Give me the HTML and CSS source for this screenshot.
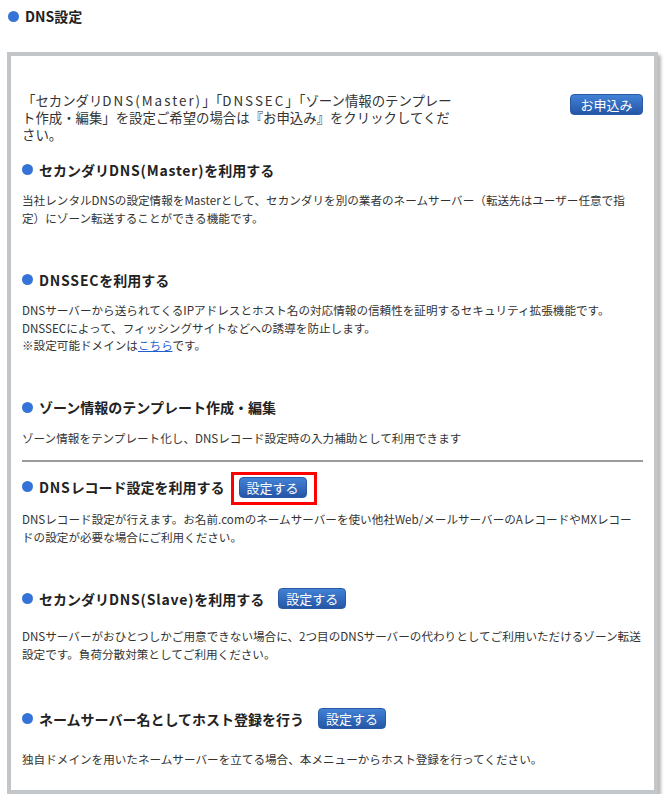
FILE: index.html
```html
<!DOCTYPE html>
<html lang="ja">
<head>
<meta charset="utf-8">
<title>DNS設定</title>
<link rel="stylesheet" href="styles.css">
</head>
<body>
<h1 class="page-title"><span class="dot dot--title"></span>DNS設定</h1>
<div class="panel">
  <div class="intro">
    <p class="intro-text">「セカンダリ<span class="latin">DNS(Master)</span>」「<span class="latin">DNSSEC</span>」「ゾーン情報のテンプレー<br>ト作成・編集」を設定ご希望の場合は『お申込み』をクリックしてくだ<br>さい。</p>
    <a class="btn btn--apply" href="#">お申込み</a>
  </div>

  <div class="sec sec--first">
    <h2 class="heading"><span class="dot"></span>セカンダリ<span class="latin-h">DNS(Master)</span>を利用する</h2>
    <p class="desc">当社レンタルDNSの設定情報をMasterとして、セカンダリを別の業者のネームサーバー（転送先はユーザー任意で指<br>定）にゾーン転送することができる機能です。</p>
  </div>

  <div class="sec">
    <h2 class="heading"><span class="dot"></span><span class="latin-h">DNSSEC</span>を利用する</h2>
    <p class="desc">DNSサーバーから送られてくるIPアドレスとホスト名の対応情報の信頼性を証明するセキュリティ拡張機能です。<br>DNSSECによって、フィッシングサイトなどへの誘導を防止します。<br>※設定可能ドメインは<a class="link" href="#">こちら</a>です。</p>
  </div>

  <div class="sec">
    <h2 class="heading"><span class="dot"></span>ゾーン情報のテンプレート作成・編集</h2>
    <p class="desc">ゾーン情報をテンプレート化し、DNSレコード設定時の入力補助として利用できます</p>
  </div>

  <hr class="rule">

  <div class="sec sec--after-rule">
    <h2 class="heading"><span class="dot"></span><span class="latin-h">DNS</span>レコード設定を利用する<span class="highlight"><a class="btn btn--set" href="#">設定する</a></span></h2>
    <p class="desc desc--first-btn">DNSレコード設定が行えます。お名前.comのネームサーバーを使い他社Web/メールサーバーのAレコードやMXレコー<br>ドの設定が必要な場合にご利用ください。</p>
  </div>

  <div class="sec">
    <h2 class="heading"><span class="dot"></span>セカンダリ<span class="latin-h">DNS(Slave)</span>を利用する<a class="btn btn--set btn--gap" href="#">設定する</a></h2>
    <p class="desc desc--btn">DNSサーバーがおひとつしかご用意できない場合に、2つ目のDNSサーバーの代わりとしてご利用いただけるゾーン転送<br>設定です。負荷分散対策としてご利用ください。</p>
  </div>

  <div class="sec sec--last">
    <h2 class="heading"><span class="dot"></span>ネームサーバー名としてホスト登録を行う<a class="btn btn--set btn--gap" href="#">設定する</a></h2>
    <p class="desc desc--btn2">独自ドメインを用いたネームサーバーを立てる場合、本メニューからホスト登録を行ってください。</p>
  </div>
</div>
</body>
</html>
```

FILE: styles.css
```css
* { box-sizing: border-box; }

html, body {
  margin: 0;
  padding: 0;
  background: #ffffff;
}

body {
  font-family: "Noto Sans CJK JP", "Noto Sans", sans-serif;
  color: #333333;
  width: 669px;
}

.page-title {
  margin: 0;
  padding: 8px 0 0 8px;
  height: 25px;
  display: flex;
  align-items: center;
  font-size: 14px;
  line-height: 17px;
  font-weight: bold;
  color: #222222;
}

.dot {
  display: inline-block;
  width: 11px;
  height: 11px;
  border-radius: 50%;
  background: #3574d6;
  margin-right: 6px;
  flex: none;
}

.panel {
  margin: 27px 0 0 7px;
  width: 651px;
  border: 4px solid #c3c6c9;
  box-shadow: 3px 3px 3px rgba(0, 0, 0, 0.28);
  background: #ffffff;
  padding: 36px 11px 21px 11px;
}

.intro {
  display: flex;
  justify-content: space-between;
  align-items: flex-start;
}

.intro-text {
  margin: 0;
  font-size: 13.4px;
  line-height: 17px;
  white-space: nowrap;
  color: #333333;
}

.latin {
  letter-spacing: 2px;
}

.latin-h {
  letter-spacing: 0.8px;
}

.btn {
  display: inline-flex;
  align-items: center;
  justify-content: center;
  height: 21px;
  border-radius: 4px;
  border: 1px solid #2a5aa3;
  background: linear-gradient(#4282d6, #2556a6);
  color: #ffffff;
  font-size: 13px;
  font-weight: normal;
  letter-spacing: 0;
  text-decoration: none;
  line-height: 1;
  flex: none;
}

.btn--apply {
  width: 73px;
  margin-top: 2px;
  margin-right: 0;
}

.btn--set {
  width: 68px;
}

.btn--gap {
  margin-left: 14px;
}

.highlight {
  display: inline-flex;
  border: 3px solid #ff0000;
  padding: 2px 7px 4px 5px;
  margin: -4px 0 -8px 6px;
}

.sec {
  margin-top: 42px;
}

.sec--first {
  margin-top: 16px;
}

.sec--after-rule {
  margin-top: 14px;
}

.sec--last {
  margin-top: 45px;
}

.heading {
  margin: 0;
  height: 21px;
  display: flex;
  align-items: center;
  font-size: 14px;
  font-weight: bold;
  color: #222222;
  white-space: nowrap;
}

.desc {
  margin: 12px 0 0 0;
  font-size: 11.6px;
  line-height: 17.5px;
  white-space: nowrap;
  color: #333333;
}

.desc--first-btn {
  margin-top: 14px;
}

.desc--btn {
  margin-top: 19px;
}

.desc--btn2 {
  margin-top: 22px;
}

.link {
  color: #1f5fd1;
  text-decoration: underline;
}

.rule {
  margin: 13px 0 0 0;
  height: 2px;
  border: none;
  background: #9c9c9c;
}
```
